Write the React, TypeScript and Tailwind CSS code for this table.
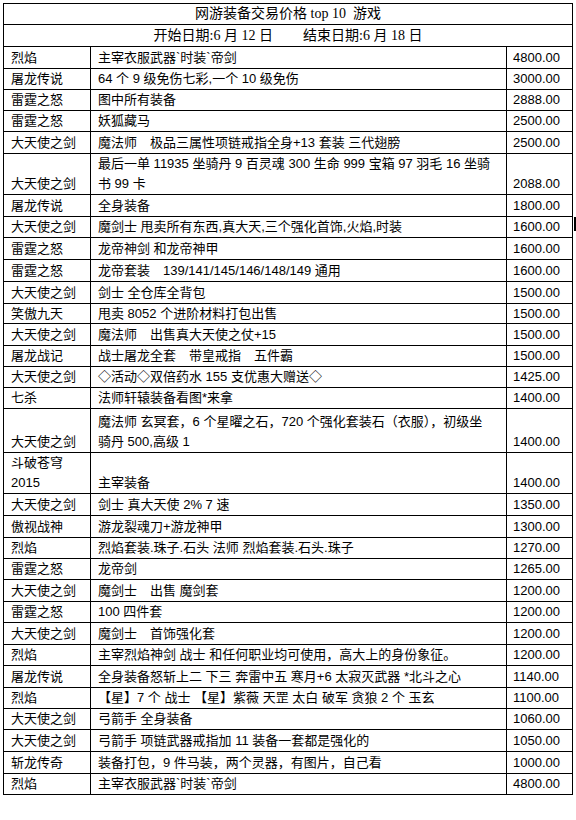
const rows = [
  { h: 22, game: ['烈焰'], desc: ['主宰衣服武器`时装`帝剑'], price: '4800.00' },
  { h: 21, game: ['屠龙传说'], desc: ['64 个 9 级免伤七彩,一个 10 级免伤'], price: '3000.00' },
  { h: 21, game: ['雷霆之怒'], desc: ['图中所有装备'], price: '2888.00' },
  { h: 21, game: ['雷霆之怒'], desc: ['妖狐藏马'], price: '2500.00' },
  { h: 22, game: ['大天使之剑'], desc: ['魔法师　极品三属性项链戒指全身+13 套装 三代翅膀'], price: '2500.00' },
  {
    h: 41,
    game: ['大天使之剑'],
    desc: ['最后一单 11935 坐骑丹 9 百灵魂 300 生命 999 宝箱 97 羽毛 16 坐骑', '书 99 卡'],
    price: '2088.00',
  },
  { h: 22, game: ['屠龙传说'], desc: ['全身装备'], price: '1800.00' },
  { h: 21, game: ['大天使之剑'], desc: ['魔剑士 甩卖所有东西,真大天,三个强化首饰,火焰,时装'], price: '1600.00', mark: true },
  { h: 22, game: ['雷霆之怒'], desc: ['龙帝神剑 和龙帝神甲'], price: '1600.00' },
  { h: 22, game: ['雷霆之怒'], desc: ['龙帝套装　139/141/145/146/148/149 通用'], price: '1600.00' },
  { h: 22, game: ['大天使之剑'], desc: ['剑士 全仓库全背包'], price: '1500.00' },
  { h: 20, game: ['笑傲九天'], desc: ['甩卖 8052 个进阶材料打包出售'], price: '1500.00' },
  { h: 22, game: ['大天使之剑'], desc: ['魔法师　出售真大天使之仗+15'], price: '1500.00' },
  { h: 21, game: ['屠龙战记'], desc: ['战士屠龙全套　带皇戒指　五件霸'], price: '1500.00' },
  { h: 21, game: ['大天使之剑'], desc: ['◇活动◇双倍药水 155 支优惠大赠送◇'], price: '1425.00' },
  { h: 21, game: ['七杀'], desc: ['法师轩辕装备看图*来拿'], price: '1400.00' },
  {
    h: 44,
    game: ['大天使之剑'],
    desc: ['魔法师 玄冥套，6 个星曜之石，720 个强化套装石（衣服），初级坐', '骑丹 500,高级 1'],
    price: '1400.00',
  },
  { h: 41, game: ['斗破苍穹', '2015'], desc: ['主宰装备'], price: '1400.00' },
  { h: 22, game: ['大天使之剑'], desc: ['剑士 真大天使 2% 7 速'], price: '1350.00' },
  { h: 22, game: ['傲视战神'], desc: ['游龙裂魂刀+游龙神甲'], price: '1300.00' },
  { h: 21, game: ['烈焰'], desc: ['烈焰套装.珠子.石头 法师 烈焰套装.石头.珠子'], price: '1270.00' },
  { h: 21, game: ['雷霆之怒'], desc: ['龙帝剑'], price: '1265.00' },
  { h: 22, game: ['大天使之剑'], desc: ['魔剑士　出售 魔剑套'], price: '1200.00' },
  { h: 21, game: ['雷霆之怒'], desc: ['100 四件套'], price: '1200.00' },
  { h: 22, game: ['大天使之剑'], desc: ['魔剑士　首饰强化套'], price: '1200.00' },
  { h: 21, game: ['烈焰'], desc: ['主宰烈焰神剑 战士 和任何职业均可使用，高大上的身份象征。'], price: '1200.00' },
  { h: 22, game: ['屠龙传说'], desc: ['全身装备怒斩上二 下三 奔雷中五 寒月+6 太寂灭武器 *北斗之心'], price: '1140.00' },
  { h: 21, game: ['烈焰'], desc: ['【星】7 个 战士 【星】紫薇 天罡 太白 破军 贪狼 2 个 玉玄'], price: '1100.00' },
  { h: 21, game: ['大天使之剑'], desc: ['弓箭手 全身装备'], price: '1060.00' },
  { h: 22, game: ['大天使之剑'], desc: ['弓箭手 项链武器戒指加 11 装备一套都是强化的'], price: '1050.00' },
  { h: 22, game: ['斩龙传奇'], desc: ['装备打包，9 件马装，两个灵器，有图片，自己看'], price: '1000.00' },
  { h: 21, game: ['烈焰'], desc: ['主宰衣服武器`时装`帝剑'], price: '4800.00' },
];

const heights: Record<number, string> = {
  20: 'h-[20px]',
  21: 'h-[21px]',
  22: 'h-[22px]',
  41: 'h-[41px]',
  44: 'h-[44px]',
};

export default function App() {
  return (
    <div className="w-[576px] h-[820px] bg-white pt-[3px] pl-[3px] text-black font-['Liberation_Sans','Noto_Sans_CJK_SC',sans-serif] text-[13px] leading-[20px]">
      <div className="w-[570px] border-t border-l border-r border-black">
        <div className="h-[21px] border-b border-black flex items-center justify-center font-['Liberation_Serif','Noto_Sans_CJK_SC',serif] text-[14px] whitespace-pre">
          网游装备交易价格 top 10  游戏
        </div>
        <div className="h-[22px] border-b border-black flex items-center justify-center font-['Liberation_Serif','Noto_Sans_CJK_SC',serif] text-[14px] whitespace-pre">
          <span>开始日期:6 月 12 日</span>
          <span className="ml-[30px]">结束日期:6 月 18 日</span>
        </div>
        {rows.map((r, i) => (
          <div key={i} className={`relative grid grid-cols-[87px_416px_65px] border-b border-black ${heights[r.h]}`}>
            <div className="border-r border-black pl-[7px] flex flex-col justify-end whitespace-pre">
              {r.game.map((g, j) => (
                <span key={j}>{g}</span>
              ))}
            </div>
            <div className="border-r border-black pl-[7px] flex flex-col justify-end whitespace-pre">
              {r.desc.map((d, j) => (
                <span key={j}>{d}</span>
              ))}
            </div>
            <div className="pl-[6px] flex flex-col justify-end">
              <span>{r.price}</span>
            </div>
            {r.mark && <div className="absolute right-[-5px] top-0 w-[3px] h-[14px] bg-black" />}
          </div>
        ))}
      </div>
    </div>
  );
}
